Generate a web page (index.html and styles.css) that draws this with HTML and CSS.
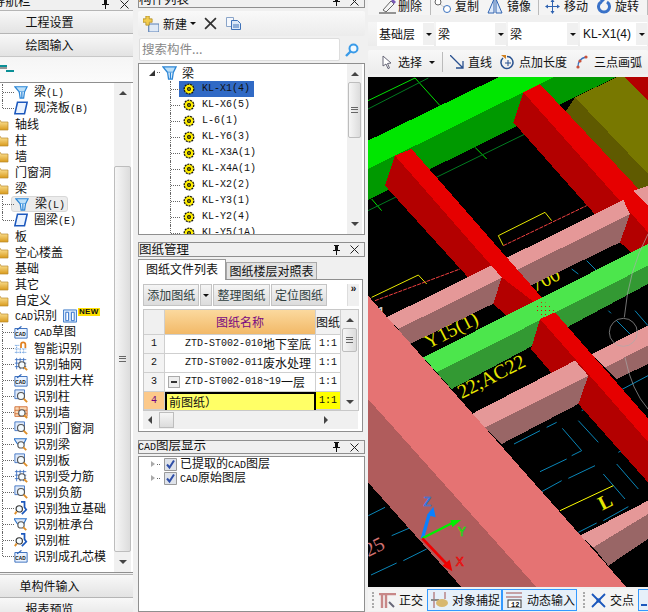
FILE: index.html
```html
<!DOCTYPE html>
<html lang="zh">
<head>
<meta charset="utf-8">
<title>CAD</title>
<link rel="stylesheet" href="styles.css">
</head>
<body>
<svg class="defs" aria-hidden="true">
  <defs>
    <linearGradient id="fold" x1="0" y1="0" x2="0" y2="1"><stop offset="0" stop-color="#ffe9a0"/><stop offset="1" stop-color="#d99a1c"/></linearGradient>
    <symbol id="pin" viewBox="0 0 9 10"><path d="M2 0h5v1H6v4h2v1H5v4H4V6H1V5h2V1H2z" fill="#111"/></symbol>
    <symbol id="close" viewBox="0 0 9 9"><path d="M.5.5l8 8M8.5.5l-8 8" stroke="#222" fill="none"/></symbol>
    <symbol id="beam" viewBox="0 0 16 16"><path d="M1 2h14l-3 6H6z" fill="#bcdff8" stroke="#2b86d6" stroke-width="1.4"/><path d="M6 8l1 7h4l1-7M9 8v7" fill="#e9f5ff" stroke="#2b86d6" stroke-width="1.4"/></symbol>
    <symbol id="slab" viewBox="0 0 16 16"><path d="M4 1.5h11l-3 13H1z" fill="#eaf3ff" stroke="#1c58bd" stroke-width="1.8"/></symbol>
    <symbol id="folder" viewBox="0 0 15 13"><path d="M0 2h6l1 2h7v8H0z" fill="url(#fold)" stroke="#b98a2e" stroke-width=".7"/></symbol>
    <symbol id="gear" viewBox="0 0 12 12"><circle cx="6" cy="6" r="4.8" fill="#ffee00" stroke="#111" stroke-width="1.300" stroke-dasharray="2 .9"/><circle cx="6" cy="6" r="2" fill="#111"/><circle cx="6" cy="6" r=".8" fill="#ffee00"/></symbol>
    <symbol id="cad" viewBox="0 0 16 16"><path d="M1 4h14v11H1z" fill="#eaf3ff" stroke="#2a62b8"/><path d="M3 5l5-4 1 1-5 4z" fill="#2a62b8"/><text x="1.5" y="13" class="cadlab">CAD</text></symbol>
    <symbol id="lens" viewBox="0 0 16 16"><path d="M1 1h11v10H1z" fill="#dfeafa" stroke="#3a6fc0"/><circle cx="8" cy="8" r="4" fill="#f4fbff" stroke="#555" stroke-width="1.3"/><path d="M11 11l4 4" stroke="#e0902a" stroke-width="2.2"/></symbol>
    <symbol id="lensgrid" viewBox="0 0 16 16"><path d="M1 3h13M1 7h13M1 11h13M3 1v13M7 1v13M11 1v13" stroke="#3a6fc0" fill="none"/><circle cx="9" cy="9" r="3.6" fill="#f4fbff" stroke="#555" stroke-width="1.3"/><path d="M11.5 11.5l3.5 3.5" stroke="#e0902a" stroke-width="2.2"/></symbol>
    <symbol id="lenswall" viewBox="0 0 16 16"><path d="M1 2h14v11H1z" fill="#f8d9b8" stroke="#d06a30"/><path d="M1 6h14M1 10h14M6 2v11" stroke="#d06a30"/><circle cx="9" cy="9" r="3.6" fill="#f4fbff" stroke="#555" stroke-width="1.3"/><path d="M11.5 11.5l3.5 3.5" stroke="#e0902a" stroke-width="2.2"/></symbol>
    <symbol id="lensbeam" viewBox="0 0 16 16"><path d="M0 2h14l-3 6H4z" fill="#dfeafa" stroke="#2b72c8" stroke-width="1.3"/><circle cx="8" cy="9" r="3.6" fill="#f4fbff" stroke="#555" stroke-width="1.3"/><path d="M10.5 11.5l3.5 3.5" stroke="#e0902a" stroke-width="2.2"/></symbol>
    <symbol id="lenspile" viewBox="0 0 16 16"><path d="M8 1h4v6l2 3-5 5" fill="none" stroke="#1c58bd" stroke-width="2"/><circle cx="6" cy="9" r="3.6" fill="#f4fbff" stroke="#333" stroke-width="1.3"/><path d="M3 12l-2 3" stroke="#e0902a" stroke-width="2.2"/></symbol>
  </defs>
</svg>

<div class="col-left">
  <div class="title title-left"><span class="title-text nav-title">导航栏</span><svg class="pin"><use href="#pin"/></svg><svg class="x"><use href="#close"/></svg></div>
  <div class="navbtn b1">工程设置</div>
  <div class="navbtn">绘图输入</div>
  <div class="mini-bar"><svg class="dash" viewBox="0 0 14 8"><path d="M0 1h7M6 6h8" stroke="#0a8f96" stroke-width="2"/><path d="M0 3h7" stroke="#333"/></svg></div>
  <div class="left-tree">
    <div class="left-rows">
      <div class="row child"><i class="conn"></i><svg class="ic"><use href="#beam"/></svg><span>梁<b class="m">(L)</b></span></div>
      <div class="row child"><i class="conn end"></i><svg class="ic"><use href="#slab"/></svg><span>现浇板<b class="m">(B)</b></span></div>
      <div class="row top"><svg class="fd"><use href="#folder"/></svg><span>轴线</span></div>
      <div class="row top"><svg class="fd"><use href="#folder"/></svg><span>柱</span></div>
      <div class="row top"><svg class="fd"><use href="#folder"/></svg><span>墙</span></div>
      <div class="row top"><svg class="fd"><use href="#folder"/></svg><span>门窗洞</span></div>
      <div class="row top"><svg class="fd"><use href="#folder"/></svg><span>梁</span></div>
      <div class="row child"><i class="conn"></i><div class="sel-pill"><svg class="ic"><use href="#beam"/></svg><span>梁<b class="m">(L)</b></span></div></div>
      <div class="row child"><i class="conn end"></i><svg class="ic"><use href="#slab"/></svg><span>圈梁<b class="m">(E)</b></span></div>
      <div class="row top"><svg class="fd"><use href="#folder"/></svg><span>板</span></div>
      <div class="row top"><svg class="fd"><use href="#folder"/></svg><span>空心楼盖</span></div>
      <div class="row top"><svg class="fd"><use href="#folder"/></svg><span>基础</span></div>
      <div class="row top"><svg class="fd"><use href="#folder"/></svg><span>其它</span></div>
      <div class="row top"><svg class="fd"><use href="#folder"/></svg><span>自定义</span></div>
      <div class="row top"><svg class="fd"><use href="#folder"/></svg><span><b class="m">CAD</b>识别</span>
        <svg class="book" viewBox="0 0 15 14"><path d="M.5.5h14v13H.5z" fill="#d8e8fb" stroke="#3a78c8"/><path d="M3 3h3v9H3zM9 3h3v9H9z" fill="#fff" stroke="#2a6cc8"/></svg><span class="new">NEW</span></div>
      <div class="row child"><i class="conn"></i><svg class="ic"><use href="#cad"/></svg><span><b class="m">CAD</b>草图</span></div>
      <div class="row child"><i class="conn"></i><svg class="ic" viewBox="0 0 16 16"><path d="M1 5h5M1 9h13M1 13h13M3 5v10M7 9v6M11 9v6" stroke="#4a8ad8" stroke-dasharray="1 1" fill="none"/><path d="M8 8V4a2.5 2.5 0 0 1 5 0v4" fill="none" stroke="#e08020" stroke-width="2"/></svg><span>智能识别</span></div>
      <div class="row child"><i class="conn"></i><svg class="ic"><use href="#lensgrid"/></svg><span>识别轴网</span></div>
      <div class="row child"><i class="conn"></i><svg class="ic"><use href="#cad"/></svg><span>识别柱大样</span></div>
      <div class="row child"><i class="conn"></i><svg class="ic"><use href="#lens"/></svg><span>识别柱</span></div>
      <div class="row child"><i class="conn"></i><svg class="ic"><use href="#lenswall"/></svg><span>识别墙</span></div>
      <div class="row child"><i class="conn"></i><svg class="ic"><use href="#lens"/></svg><span>识别门窗洞</span></div>
      <div class="row child"><i class="conn"></i><svg class="ic"><use href="#lensbeam"/></svg><span>识别梁</span></div>
      <div class="row child"><i class="conn"></i><svg class="ic"><use href="#lens"/></svg><span>识别板</span></div>
      <div class="row child"><i class="conn"></i><svg class="ic"><use href="#lensgrid"/></svg><span>识别受力筋</span></div>
      <div class="row child"><i class="conn"></i><svg class="ic"><use href="#lens"/></svg><span>识别负筋</span></div>
      <div class="row child"><i class="conn"></i><svg class="ic"><use href="#lenspile"/></svg><span>识别独立基础</span></div>
      <div class="row child"><i class="conn"></i><svg class="ic"><use href="#lensbeam"/></svg><span>识别桩承台</span></div>
      <div class="row child"><i class="conn"></i><svg class="ic"><use href="#lenspile"/></svg><span>识别桩</span></div>
      <div class="row child"><i class="conn end"></i><svg class="ic"><use href="#cad"/></svg><span>识别成孔芯模</span></div>
    </div>
    <div class="vscroll vs-left">
      <span class="tri up"></span>
      <div class="thumb th-left"><span class="grip"></span></div>
      <span class="tri down"></span>
    </div>
  </div>
  <div class="navbtn b2">单构件输入</div>
  <div class="navbtn b3">报表预览</div>
</div>

<div class="col-mid">
  <div class="title title-clip"><span class="title-text">构件列表</span><svg class="pin"><use href="#pin"/></svg><svg class="x"><use href="#close"/></svg></div>
  <div class="comp-bar">
    <svg class="new-ic" viewBox="0 0 14 14"><path d="M5 7h9v7H5z" fill="#dfe9f6" stroke="#5b80b5"/><path d="M2.500 0h3v2.500H8v3H5.500V8h-3V5.500H0v-3h2.500z" fill="#f2cc50" stroke="#a88418" stroke-width=".6"/></svg>
    <span class="comp-new">新建</span><span class="tri-s"></span>
    <svg class="del-ic" viewBox="0 0 12 12"><path d="M1 1l10 10M11 1L1 11" stroke="#333" stroke-width="1.600"/></svg>
    <svg class="copy-ic" viewBox="0 0 15 13"><path d="M.5.5h7v9h-7z" fill="#f5f8fd" stroke="#8aa4c8"/><path d="M5.500 3.500h6l3 3v6h-9z" fill="#dce9f8" stroke="#3f72b8"/><path d="M7 8h6M7 10h6" stroke="#3f72b8"/></svg>
  </div>
  <div class="search-row">
    <div class="search-input">搜索构件...</div>
    <svg class="search-ic" viewBox="0 0 14 14"><circle cx="8.500" cy="5.500" r="4" fill="#f1f9ff" stroke="#3a9be8" stroke-width="2"/><path d="M5.500 8.500L1 13" stroke="#3a9be8" stroke-width="2.400"/></svg>
  </div>
  <div class="comp-tree">
    <div class="comp-rows">
      <div class="root-row"><span class="exp"></span><i class="dots"></i><svg class="ic"><use href="#beam"/></svg><span class="root-label">梁</span></div>
      <div class="comp-row"><i class="conn2"></i><div class="cell sel"><svg class="gear"><use href="#gear"/></svg><span class="label">KL-X1(4)</span></div></div>
      <div class="comp-row"><i class="conn2"></i><div class="cell"><svg class="gear"><use href="#gear"/></svg><span class="label">KL-X6(5)</span></div></div>
      <div class="comp-row"><i class="conn2"></i><div class="cell"><svg class="gear"><use href="#gear"/></svg><span class="label">L-6(1)</span></div></div>
      <div class="comp-row"><i class="conn2"></i><div class="cell"><svg class="gear"><use href="#gear"/></svg><span class="label">KL-Y6(3)</span></div></div>
      <div class="comp-row"><i class="conn2"></i><div class="cell"><svg class="gear"><use href="#gear"/></svg><span class="label">KL-X3A(1)</span></div></div>
      <div class="comp-row"><i class="conn2"></i><div class="cell"><svg class="gear"><use href="#gear"/></svg><span class="label">KL-X4A(1)</span></div></div>
      <div class="comp-row"><i class="conn2"></i><div class="cell"><svg class="gear"><use href="#gear"/></svg><span class="label">KL-X2(2)</span></div></div>
      <div class="comp-row"><i class="conn2"></i><div class="cell"><svg class="gear"><use href="#gear"/></svg><span class="label">KL-Y3(1)</span></div></div>
      <div class="comp-row"><i class="conn2"></i><div class="cell"><svg class="gear"><use href="#gear"/></svg><span class="label">KL-Y2(4)</span></div></div>
      <div class="comp-row"><i class="conn2"></i><div class="cell"><svg class="gear"><use href="#gear"/></svg><span class="label">KL-Y5(1A)</span></div></div>
    </div>
    <div class="vscroll vs-comp">
      <span class="tri up"></span>
      <div class="thumb th-comp"><span class="grip"></span></div>
      <span class="tri down"></span>
    </div>
  </div>

  <div class="title t2"><span class="title-text">图纸管理</span><svg class="pin"><use href="#pin"/></svg><svg class="x"><use href="#close"/></svg></div>
  <div class="tabs"><span class="tab on">图纸文件列表</span><span class="tab">图纸楼层对照表</span></div>
  <div class="tab-body">
    <div class="dw-bar">
      <span class="dw-btn w57">添加图纸</span><span class="dw-btn dw-arrow"><span class="tri-s"></span></span><span class="dw-btn w57">整理图纸</span><span class="dw-btn w57">定位图纸</span>
      <span class="dw-more">&raquo;</span>
    </div>
    <div class="dw-grid">
      <div class="cells">
        <div class="c corner"></div><div class="c head">图纸名称</div><div class="c head2">图纸</div>
        <div class="c num">1</div><div class="c name"><b class="m">ZTD-ST002-010</b>地下室底</div><div class="c ratio"><b class="m">1:1</b></div>
        <div class="c num">2</div><div class="c name"><b class="m">ZTD-ST002-011</b>废水处理</div><div class="c ratio"><b class="m">1:1</b></div>
        <div class="c num">3</div><div class="c name"><span class="minus"></span><b class="m">ZTD-ST002-018~19</b>一层</div><div class="c ratio"><b class="m">1:1</b></div>
        <div class="c num cur">4</div><div class="c edit">前图纸）</div><div class="c ratio cur-r"><b class="m">1:1</b></div>
      </div>
      <div class="vscroll vs-grid">
        <span class="tri up"></span>
        <div class="thumb th-grid"><span class="grip"></span></div>
        <span class="tri down"></span>
      </div>
    </div>
    <div class="hscroll"><span class="tri left"></span><div class="hthumb"></div><span class="tri right"></span></div>
  </div>

  <div class="title t3"><span class="title-text t3-text"><b class="m">CAD</b>图层显示</span><svg class="pin"><use href="#pin"/></svg><svg class="x"><use href="#close"/></svg></div>
  <div class="layer-box">
    <div class="layer"><span class="tri-o"></span><i class="dots sm"></i><svg class="chk" viewBox="0 0 13 13"><path d="M.5.5h12v12H.5z" fill="#dfe3ea" stroke="#9a9a9a"/><path d="M3 6.500l2.500 3 4.500-7" fill="none" stroke="#2f4fa8" stroke-width="2"/></svg><span>已提取的<b class="m">CAD</b>图层</span></div>
    <div class="layer"><span class="tri-o"></span><i class="dots sm"></i><svg class="chk" viewBox="0 0 13 13"><path d="M.5.5h12v12H.5z" fill="#dfe3ea" stroke="#9a9a9a"/><path d="M3 6.500l2.500 3 4.500-7" fill="none" stroke="#2f4fa8" stroke-width="2"/></svg><span><b class="m">CAD</b>原始图层</span></div>
  </div>
</div>

<div class="col-right">
  <div class="bar bar1">
    <div class="bar1-in">
      <svg class="tb i-del" viewBox="0 0 19 16"><path d="M1 15h17" stroke="#333"/><path d="M5 12L13 3l3 3-8 8z" fill="#f4f4f4" stroke="#666"/><path d="M13 3l2-2 3 3-2 2z" fill="#7a5ab8"/></svg><span class="t">删除</span><i class="sep s1"></i>
      <svg class="tb i-cpy" viewBox="0 0 18 16"><circle cx="4" cy="4" r="3" fill="#fff" stroke="#666"/><circle cx="13" cy="11" r="3.500" fill="#fff" stroke="#3a72c0"/><path d="M6 6l5 4" stroke="#888" stroke-dasharray="1 1"/></svg><span class="t">复制</span>
      <svg class="tb i-mir" viewBox="0 0 16 16"><path d="M7 1v14H1zM9 1v14h6z" fill="#dfeafa" stroke="#2f62b0"/></svg><span class="t">镜像</span><i class="sep s2"></i>
      <svg class="tb i-mov" viewBox="0 0 15 15"><path d="M7.500 0l2 3h-4zM7.500 15l2-3h-4zM0 7.500l3-2v4zM15 7.500l-3-2v4z" fill="#2f62b0"/><path d="M7.500 2v11M2 7.500h11" stroke="#2f62b0"/></svg><span class="t">移动</span>
      <svg class="tb i-rot" viewBox="0 0 14 15"><path d="M4 3a5.500 5.500 0 1 0 6 0" fill="none" stroke="#3a72c8" stroke-width="3"/><path d="M3 0l5 1-4 4z" fill="#3a72c8"/></svg><span class="t">旋转</span><i class="sep s3"></i>
    </div>
  </div>
  <div class="bar bar2">
    <div class="sel-box w57b"><span>基础层</span><span class="sel-arrow"><span class="tri-s"></span></span></div>
    <div class="sel-box w70"><span>梁</span><span class="sel-arrow"><span class="tri-s"></span></span></div>
    <div class="sel-box w70"><span>梁</span><span class="sel-arrow"><span class="tri-s"></span></span></div>
    <div class="sel-box wlast"><span class="sans">KL-X1(4)</span><span class="sel-arrow"><span class="tri-s"></span></span></div>
  </div>
  <div class="bar bar3">
    <svg class="tb i-sel" viewBox="0 0 10 14"><path d="M1 1l8 7-3.500.5L7.500 13 6 13.600 4 9 1 11z" fill="#fff" stroke="#667"/></svg><span class="t">选择</span><span class="tri-s ml7"></span><i class="sep s4"></i>
    <svg class="tb i-line" viewBox="0 0 14 14"><path d="M0 0l13 13M13 6v7H6" fill="none" stroke="#28508f" stroke-width="1.300"/></svg><span class="t">直线</span>
    <svg class="tb i-pt" viewBox="0 0 15 15"><path d="M3 3a6 6 0 1 0 4-1.500" fill="none" stroke="#26508f" stroke-width="1.500"/><path d="M1 0h5v4z" fill="#d08020"/><path d="M8 5v6M5 8h6" stroke="#26508f"/></svg><span class="t">点加长度</span>
    <svg class="tb i-arc" viewBox="0 0 12 14"><path d="M2 12C2 6 5 3 10 2" fill="none" stroke="#3a72c0" stroke-width="1.300"/><circle cx="2" cy="12" r="1.600" fill="#c8503a"/><circle cx="4" cy="6" r="1.600" fill="#c8503a"/><circle cx="10" cy="2" r="1.600" fill="#c8503a"/></svg><span class="t">三点画弧</span>
  </div>

  <svg class="scene" viewBox="9 9 840 1530" preserveAspectRatio="none" role="img" aria-label="3D">
    <rect x="9" y="9" width="840" height="1530" fill="#000"/>
    <g fill="none" stroke-width="3">
      <path d="M9 80L150 12L225 95M330 220L365 255M20 375L50 410" stroke="#00e000"/>
      <path d="M9 105L190 12M9 410L480 180" stroke="#007a20"/>
      <path d="M400 485L540 415L560 440M400 485L415 515M20 670L160 603L185 630" stroke="#e8e800"/>
      <path d="M415 515L665 395M30 680L285 585" stroke="#f04040" stroke-dasharray="12 3"/>
      <path d="M620 585L640 600M665 560L695 590M730 710L738 718M755 740L800 785M810 710L849 755" stroke="#0a86b8"/>
      <g transform="translate(0 795)" stroke="#0a86b8">
        <path d="M545 265L575 250M447 315L525 275M592 268L650 335L620 350M640 245L700 310M525 398L605 360M610 418L690 380M530 458L590 425M715 405L780 480M755 375L820 450M640 580L695 552M715 545L790 503M10 530L60 505M18 708L95 672M115 665L185 630M80 590L150 560M760 340L849 290M650 215L849 110"/>
        <path d="M585 515L745 440" stroke="#ffff00"/>
      </g>
    </g>
    <text transform="translate(190 825) rotate(-27)" class="cad-y s60">Y15(1)</text>
    <text transform="translate(510 655) rotate(-27)" class="cad-y s60">700</text>
    <text transform="translate(290 975) rotate(-27)" class="cad-y s60">22;AC22</text>
    <text transform="translate(712 1310) rotate(-27)" class="cad-y s60 bold">L</text>
    <text transform="translate(10 1450) rotate(-27)" class="cad-p s60">25</text>
    <text transform="translate(38 725)" class="cad-w">1</text>

    <g shape-rendering="crispEdges">
      <polygon points="9,285 565,10 750,10 9,378" fill="#009900"/>
      <polygon points="9,200 400,10 565,10 9,285" fill="#00e600"/>
      <polygon points="600,115 630,70 849,300 849,335 805,350" fill="#5f5a00"/>
      <polygon points="630,70 755,10 780,10 849,80 849,300" fill="#787800"/>
      <polygon points="780,9 849,9 849,80" fill="#b30000"/>
      <polygon points="445,145 475,55 849,455 849,525 810,545 765,505 680,410" fill="#b30000"/>
      <polygon points="475,55 525,30 849,375 849,475" fill="#e60000"/>
      <polygon points="805,350 849,335 849,395" fill="#e59898"/>
      <polygon points="60,335 90,245 410,610 385,690 300,600" fill="#b30000"/>
      <polygon points="100,765 795,420 765,505 135,810 130,812" fill="#996666"/>
      <polygon points="65,730 775,378 795,420 100,765" fill="#e59898"/>
      <polygon points="410,610 385,690 430,730 525,680" fill="#b30000"/>
      <polygon points="90,245 140,225 530,670 515,690 410,610" fill="#e60000"/>
      <polygon points="215,895 849,575 849,630 260,945" fill="#339933"/>
      <polygon points="175,850 849,510 849,575 215,895" fill="#4ce64c"/>
      <polygon points="525,735 498,825 640,990 849,1225 849,1104" fill="#b30000"/>
      <polygon points="525,735 570,715 849,1033 849,1104" fill="#e60000"/>
      <polygon points="680,840 849,755 849,815 720,880" fill="#e59898"/>
      <polygon points="720,880 849,815 849,870 755,915" fill="#996666"/>
      <polygon points="360,1060 670,905 640,990 410,1110" fill="#996666"/>
      <polygon points="320,1020 630,860 670,905 360,1060" fill="#e59898"/>
      <polygon points="685,1420 849,1320 849,1395 730,1475" fill="#996666"/>
      <polygon points="645,1385 849,1280 849,1320 685,1420" fill="#e59898"/>
      <polygon points="9,975 515,1540 290,1540 9,1225" fill="#b05c5c"/>
      <polygon points="9,665 785,1540 515,1540 9,975" fill="#e57373"/>
    </g>
    <defs><pattern id="dotp" width="12" height="12" patternUnits="userSpaceOnUse"><rect width="3" height="3" fill="#e60000"/></pattern></defs>
    <polygon points="510,700 535,680 570,710 525,735" fill="url(#dotp)"/>
    <path d="M849 480Q790 590 778 730" fill="none" stroke="#aaa" stroke-width="2"/>
    <path d="M780 850Q800 950 849 1005" fill="none" stroke="#aaa" stroke-width="2"/>
    <circle cx="775" cy="775" r="42" fill="none" stroke="#aaa" stroke-width="2"/>
    <g transform="translate(0 795)">
      <path d="M172 598L192 528" stroke="#0a80ff" stroke-width="10"/><path d="M205 503L212 535L186 528z" fill="#0a80ff"/>
      <path d="M172 598L262 552" stroke="#00f000" stroke-width="7"/><path d="M288 543L262 565L256 543z" fill="#00f000"/>
      <path d="M172 598L245 675" stroke="#f00000" stroke-width="8"/><path d="M262 697L232 680L254 662z" fill="#f00000"/>
      <text x="176" y="502" class="ax ax-z">Z</text><text x="278" y="592" class="ax ax-y">Y</text><text x="272" y="680" class="ax ax-x">X</text>
    </g>
  </svg>

  <div class="status">
    <i class="grip-v"></i>
    <svg class="tb i-ort" viewBox="0 0 17 15"><path d="M0 1h17M3 1v14M7 1v14" stroke="#c88888" stroke-width="2.400"/><path d="M10 9l5 5" stroke="#667" stroke-width="2"/></svg><span class="t">正交</span>
    <div class="st-btn"><svg class="tb" viewBox="0 0 17 16"><path d="M3 0v16M14 0v7" stroke="#a05050"/><path d="M0 8h8" stroke="#888" stroke-width="2"/><ellipse cx="11" cy="11" rx="6" ry="4" fill="#d8b870"/></svg><span class="t">对象捕捉</span></div>
    <div class="st-btn"><svg class="tb" viewBox="0 0 17 16"><path d="M0 1h16M0 5h16" stroke="#a05050"/><rect x="2" y="8" width="13" height="8" fill="#fff" stroke="#333"/><text x="5" y="15" class="n12">12</text></svg><span class="t">动态输入</span></div>
    <i class="grip-v g2"></i>
    <svg class="tb i-cross" viewBox="0 0 15 15"><path d="M1 1l13 13M14 1L1 14" stroke="#1c58bd" stroke-width="1.800"/><rect x="5.500" y="5.500" width="4" height="4" fill="#1c58bd"/></svg><span class="t">交点</span>
    <div class="st-last"><i></i></div>
  </div>
</div>
</body>
</html>
```
FILE: styles.css
```css
* { box-sizing: border-box; }
html, body { margin: 0; padding: 0; }
body {
  width: 648px; height: 612px; overflow: hidden;
  display: flex; align-items: flex-start;
  background: #f0f0f0; color: #111;
  font: 12px/16px "Noto Sans CJK SC", "Liberation Sans", sans-serif;
}
.defs { width: 0; height: 0; position: absolute; }
.m { font: 10px/16px "Liberation Mono", monospace; }
.cadlab { font: bold 5.500px "Liberation Sans", sans-serif; fill: #111; }

/* columns */
.col-left { width: 133px; height: 612px; flex: none; overflow: hidden; display: flex; flex-direction: column; }
.col-mid { width: 227px; height: 612px; flex: none; margin-left: 5px; display: flex; flex-direction: column; overflow: hidden; }
.col-right { width: 280px; height: 612px; flex: none; margin-left: 3px; display: flex; flex-direction: column; overflow: hidden; }

/* panel title */
.title { display: flex; align-items: center; border: 1px solid #8f8f8f; background: #f0f0f0; height: 15px; font-size: 12.500px; flex: none; }
.title-text { flex: 1; white-space: nowrap; }
.pin { width: 9px; height: 10px; margin-right: 9px; }
.x { width: 9px; height: 9px; margin-right: 5px; }
.title-clip { height: 8px; border-top: 0; align-items: flex-end; }
.title-clip .title-text { line-height: 16px; height: 16px; margin-top: -8px; }
.title-clip .pin, .title-clip .x { margin-bottom: 1px; }
.title-left { height: 9px; border: 0; align-items: flex-end; }
.nav-title { margin-left: -7px; line-height: 16px; height: 16px; margin-top: -7px; }
.title-left .pin { margin-right: 10px; }
.title-left .x { margin-right: 4px; }

/* left */
.navbtn { height: 23px; flex: none; padding-right: 34px; text-align: center; line-height: 22px; font-size: 12px; border-top: 1px solid #b5b5b5; background: linear-gradient(#f8f8f8, #e3e3e3); }
.b1 { margin-top: 1px; }
.mini-bar { height: 26px; flex: none; background: linear-gradient(#f5f5f5, #fbfbfb); border-top: 1px solid #c8c8c8; padding-top: 8px; }
.dash { width: 14px; height: 8px; display: block; }
.left-tree { height: 491px; flex: none; display: flex; background: #fff; border-top: 1px solid #8f8f8f; border-bottom: 1px solid #8f8f8f; overflow: hidden; margin-bottom: 1px; }
.left-rows { flex: 1; min-width: 0; padding-top: 1px; }
.row { height: 16px; display: flex; align-items: center; white-space: nowrap; }
.row.top { margin-left: -6px; }
.row.child { padding-left: 2px; }
.fd { width: 15px; height: 13px; margin-right: 6px; flex: none; }
.ic { width: 14px; height: 14px; margin-right: 6px; flex: none; }
.conn { align-self: stretch; width: 12px; border-left: 1px dotted #666; position: relative; flex: none; }
.conn::after { content: ""; position: absolute; left: 0; top: 8px; width: 11px; border-top: 1px dotted #666; }
.conn.end { align-self: flex-start; height: 8px; }
.sel-pill { display: flex; align-items: center; height: 16px; margin-left: -3px; padding-left: 3px; width: 57px; border-radius: 3px; background: #ececec; border: 1px solid #d8d8d8; }
.book { width: 14px; height: 14px; margin-left: 6px; flex: none; }
.new { font: bold 8px/8px "Liberation Sans", sans-serif; color: #111; background: #ffe000; padding: 0 1px; margin: -8px 0 0 1px; letter-spacing: .3px; }

/* scrollbars */
.vscroll { flex: none; display: flex; flex-direction: column; align-items: stretch; background: #f0f0f0; position: relative; }
.vs-left { width: 17px; margin-right: 2px; padding-top: 8px; height: 100%; }
.thumb { display: flex; align-items: center; justify-content: center; border: 1px solid #bdbdbd; border-radius: 2px; background: linear-gradient(90deg, #f6f6f6, #dcdcdc); flex: none; }
.grip { width: 7px; height: 6px; border-top: 1px solid #666; border-bottom: 1px solid #666; position: relative; }
.grip::after { content: ""; position: absolute; left: 0; right: 0; top: 1px; border-top: 1px solid #666; }
.tri { width: 0; height: 0; display: block; border-style: solid; border-color: transparent; align-self: center; flex: none; }
.tri.up { border-width: 0 4px 4px; border-bottom-color: #444; }
.tri.down { border-width: 4px 4px 0; border-top-color: #444; }
.tri.left { border-width: 4px 4px 4px 0; border-right-color: #444; }
.tri.right { border-width: 4px 0 4px 4px; border-left-color: #444; }
.th-left { height: 386px; margin-top: 71px; }
.vs-left .down { margin-top: 8px; }

/* component panel */
.comp-bar { margin-top: 3px; height: 25px; flex: none; display: flex; align-items: center; background: linear-gradient(#f9f9f9, #ececec); padding-left: 5px; border-radius: 2px; }
.new-ic { width: 16px; height: 16px; flex: none; }
.comp-new { margin-left: 4px; }
.tri-s { width: 0; height: 0; display: inline-block; border-style: solid; border-width: 3px 3px 0; border-color: #111 transparent transparent; flex: none; }
.comp-bar .tri-s { margin-left: 3px; }
.del-ic { width: 13px; height: 13px; margin-left: 8px; flex: none; }
.copy-ic { width: 15px; height: 13px; margin-left: 9px; flex: none; }
.search-row { height: 23px; margin-top: 2px; flex: none; display: flex; align-items: center; }
.search-input { width: 201px; height: 23px; margin-left: 1px; background: #fff; border: 1px solid #ddd; border-radius: 2px; color: #888; font-size: 12.500px; line-height: 20px; padding-left: 2px; }
.search-ic { width: 14px; height: 14px; margin-left: 5px; flex: none; }
.comp-tree { height: 172px; margin-top: 2px; flex: none; display: flex; background: #fff; border: 1px solid #8f8f8f; overflow: hidden; }
.comp-rows { flex: 1; min-width: 0; overflow: hidden; }
.root-row { height: 17px; display: flex; align-items: center; padding-left: 10px; }
.exp { width: 0; height: 0; border-style: solid; border-width: 0 0 6px 6px; border-color: transparent transparent #333; margin-right: 2px; }
.dots { width: 3px; border-top: 1px dotted #666; margin-right: 2px; }
.root-row .ic { margin-right: 5px; width: 15px; height: 15px; }
.comp-row { height: 16px; display: flex; align-items: center; padding-left: 31px; white-space: nowrap; }
.conn2 { align-self: stretch; width: 9px; border-left: 1px dotted #666; position: relative; flex: none; }
.conn2::after { content: ""; position: absolute; left: 0; top: 8px; width: 9px; border-top: 1px dotted #666; }
.cell { display: flex; align-items: center; height: 16px; padding: 0 4px 0 4px; }
.cell.sel { background: #316ac5; }
.gear { width: 12px; height: 12px; margin-right: 7px; flex: none; }
.label { font: 10px/16px "Liberation Mono", monospace; height: 16px; }
.vs-comp { width: 15px; margin-right: 2px; padding-top: 8px; }
.th-comp { height: 56px; margin: 6px 1px 0; }
.vs-comp .down { margin-top: 84px; }

/* drawings panel */
.t2 { margin-top: 7px; height: 15px; }
.t2 .title-text { margin-top: -2px; }
.tabs { display: flex; align-items: flex-end; height: 21px; flex: none; margin-top: 1px; }
.tab { height: 17px; line-height: 15px; width: 91px; text-align: center; background: #e2e2e2; border: 1px solid #a8a8a8; border-bottom: 0; }
.tab.on { width: 88px; height: 21px; line-height: 18px; background: #fff; border-color: #9a9a9a; position: relative; top: 1px; }
.tab-body { width: 225px; height: 153px; flex: none; background: #fff; border: 1px solid #8f8f8f; padding: 4px 3px 0 4px; }
.dw-bar { display: flex; align-items: stretch; height: 22px; gap: 1px; }
.dw-btn { border: 1px solid #c4c4c4; background: linear-gradient(#f5f5f5, #dcdcdc); font-size: 12px; line-height: 20px; text-align: center; color: #2f3f3f; }
.w57 { width: 57px; }
.dw-arrow { width: 12px; display: flex; align-items: center; justify-content: center; }
.dw-more { width: 12px; margin-left: 19px; font: bold 10px/12px "Liberation Mono", monospace; text-align: center; border-left: 1px solid #ddd; background: #f0f0f0; }
.dw-grid { display: flex; margin-top: 3px; border: 1px solid #c8c8c8; height: 102px; overflow: hidden; }
.cells { width: 197px; flex: none; display: grid; grid-template-columns: 21px 151px 25px; grid-template-rows: 25px 19px 19px 19px 18px; overflow: hidden; }
.c { border-right: 1px solid #cfcfcf; border-bottom: 1px solid #cfcfcf; white-space: nowrap; overflow: hidden; display: flex; align-items: center; }
.corner { background: #f0f0f0; }
.head { background: linear-gradient(#fbd99e, #f2b968); color: #7a0a80; justify-content: center; font-size: 12px; }
.head2 { background: #f2f2f2; }
.num { background: #f3f3f3; justify-content: center; font: 10px/16px "Liberation Mono", monospace; }
.name { padding-left: 20px; }
.ratio { padding-left: 3px; }
.minus { width: 12px; height: 12px; border: 1px solid #aaa; margin: 0 5px 0 -17px; background: #eee; position: relative; flex: none; }
.minus::after { content: ""; position: absolute; left: 2px; right: 2px; top: 4px; border-top: 2px solid #333; }
.cur { background: #fcc98a; color: #700080; }
.edit { background: #ffff66; border: 2px solid #000; border-bottom: 0; padding-left: 2px; }
.cur-r { background: #ffff00; }
.vs-grid { width: 16px; flex: 1; padding-top: 8px; }
.th-grid { height: 24px; margin: 6px 1px 0; }
.vs-grid .down { margin-top: 48px; }
.hscroll { height: 18px; width: 215px; display: flex; align-items: center; background: #f0f0f0; padding-left: 5px; }
.hthumb { width: 15px; height: 16px; margin-left: 7px; border: 1px solid #bdbdbd; background: linear-gradient(#f6f6f6, #dcdcdc); }
.hscroll .right { margin-left: 150px; }

/* layers panel */
.t3 { margin-top: 8px; height: 14px; width: 227px; }
.t3-text { margin-left: -1px; margin-top: -1px; }
.layer-box { flex: 1; margin-top: 2px; background: #fff; border: 1px solid #8f8f8f; }
.layer { height: 14px; display: flex; align-items: center; padding-left: 12px; white-space: nowrap; font-size: 12px; line-height: 14px; }
.layer .m { line-height: 14px; }
.tri-o { width: 0; height: 0; border-style: solid; border-width: 3.500px 0 3.500px 4px; border-color: transparent transparent transparent #aaa; flex: none; margin-right: 2px; }
.dots.sm { margin-right: 4px; }
.chk { width: 13px; height: 13px; margin-right: 3px; flex: none; }

/* right toolbars */
.bar { flex: none; display: flex; white-space: nowrap; }
.t { font-size: 12px; flex: none; }
.tb { flex: none; display: block; }
.bar1 { height: 15px; overflow: hidden; }
.bar1-in { height: 15px; flex: 1; display: flex; align-items: center; padding: 0 0 3px 10px; background: #f4f4f4; }
.sep { width: 1px; height: 20px; background: #bbb; flex: none; }
.i-del { width: 19px; height: 16px; margin-right: 1px; }
.s1 { margin-left: 8px; }
.i-cpy { width: 18px; height: 16px; margin: 0 3px 0 3px; }
.i-mir { width: 16px; height: 16px; margin: 0 4px 0 8px; }
.s2 { margin-left: 7px; }
.i-mov { width: 15px; height: 15px; margin: 0 4px 0 6px; }
.i-rot { width: 14px; height: 15px; margin: 0 4px 0 9px; }
.s3 { margin-left: 8px; }
.bar2 { height: 24px; margin-top: 7px; gap: 2px; padding-left: 9px; background: linear-gradient(#f6f6f6, #ececec); overflow: hidden; }
.sel-box { height: 24px; flex: none; display: flex; align-items: center; justify-content: space-between; background: #fff; padding-left: 2px; }
.w57b { width: 57px; }
.w70 { width: 70px; }
.wlast { width: 67px; padding-left: 3px; }
.sans { font-family: "Liberation Sans", sans-serif; }
.sel-arrow { width: 11px; height: 22px; background: #f0f0f0; display: flex; align-items: center; justify-content: center; }
.bar3 { height: 24px; margin-top: 4px; align-items: center; padding-left: 14px; background: linear-gradient(#f8f8f8, #ececec); border-radius: 2px; }
.i-sel { width: 10px; height: 14px; margin-right: 6px; }
.ml7 { margin-left: 7px; }
.s4 { margin-left: 7px; }
.i-line { width: 14px; height: 14px; margin: 0 4px 0 7px; }
.i-pt { width: 15px; height: 15px; margin: 0 4px 0 8px; }
.i-arc { width: 12px; height: 14px; margin: 0 6px 0 9px; }
.scene { width: 280px; height: 510px; display: block; flex: none; margin-top: 3px; }
.cad-y { fill: #e6e600; font-family: "Liberation Serif", serif; }
.cad-p { fill: #d07070; font-family: "Liberation Serif", serif; }
.cad-w { fill: #ccc; font: bold 36px "Liberation Sans", sans-serif; }
.s60 { font-size: 60px; }
.bold { font-weight: bold; }
.ax { font: 36px "Liberation Sans", sans-serif; fill: none; stroke-width: 2; }
.ax-z { stroke: #0a80ff; }
.ax-y { stroke: #00f000; }
.ax-x { stroke: #f00000; }
.n12 { font: bold 7px "Liberation Mono", monospace; fill: #111; }

/* status bar */
.status { height: 22px; flex: none; margin-top: 2px; display: flex; align-items: center; padding-left: 4px; background: #f4f4f4; white-space: nowrap; overflow: hidden; }
.grip-v { width: 2px; height: 16px; flex: none; border-left: 2px dotted #aaa; }
.i-ort { width: 17px; height: 15px; margin: 0 3px 0 5px; }
.st-btn { height: 22px; width: 75px; flex: none; display: flex; align-items: center; gap: 4px; padding-left: 3px; background: #e6f0fa; border: 1px solid #3399ff; }
.status > .t + .st-btn { margin-left: 4px; }
.st-btn .tb { width: 17px; height: 16px; }
.g2 { margin-left: 6px; }
.i-cross { width: 15px; height: 15px; margin: 0 4px 0 6px; }
.st-last { width: 20px; height: 22px; margin-left: 4px; flex: none; background: #e6f0fa; border: 1px solid #3399ff; display: flex; align-items: flex-end; padding: 0 0 4px 2px; }
.st-last i { width: 6px; border-top: 2px solid #1c58bd; }
```
